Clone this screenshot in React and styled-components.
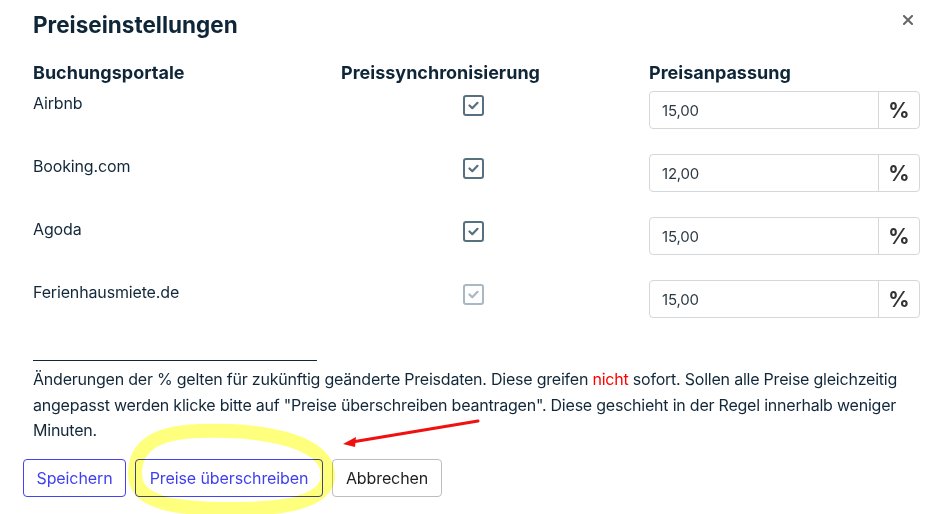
import React from "react";
import styled, { createGlobalStyle } from "styled-components";

const Global = createGlobalStyle`
  html, body { margin: 0; padding: 0; background: #fff; }
  body { font-family: "Inter", "Liberation Sans", sans-serif; color: #12283a; }
  * { box-sizing: border-box; }
`;

const Page = styled.div`
  position: relative;
  width: 932px;
  height: 514px;
  overflow: hidden;
  background: #fff;
`;

const Header = styled.div`
  display: flex;
  justify-content: space-between;
  align-items: center;
  padding: 10px 18px 0 33px;
  height: 40px;
`;

const Title = styled.h1`
  margin: 0;
  font-size: 22.5px;
  font-weight: 700;
  color: #0f2638;
  line-height: 30px;
`;

const CloseBtn = styled.button`
  border: 0;
  background: transparent;
  padding: 0;
  width: 12px;
  height: 12px;
  display: flex;
  align-items: center;
  justify-content: center;
  margin-top: -10px;
`;

const Body = styled.div`
  padding: 22px 12px 0 33px;
`;

const Grid = styled.div`
  display: grid;
  grid-template-columns: 308px 308px 1fr;
  row-gap: 25px;
`;

const HeadCell = styled.div`
  font-size: 18px;
  font-weight: 700;
  color: #0f2638;
  line-height: 22px;
  margin-bottom: -18px;
`;

const PortalName = styled.div`
  font-size: 16px;
  letter-spacing: -0.15px;
  line-height: 24px;
  color: #12283a;
`;

const CheckCell = styled.div`
  width: 264px;
  display: flex;
  justify-content: center;
  padding-top: 4px;
`;

const CheckBox = styled.span`
  width: 21px;
  height: 21px;
  border: 2px solid ${(p) => (p.$disabled ? "#a9b8c1" : "#56707f")};
  border-radius: 3px;
  display: flex;
  align-items: center;
  justify-content: center;
  color: ${(p) => (p.$disabled ? "#a9b8c1" : "#56707f")};
`;

const InputGroup = styled.div`
  display: flex;
  height: 38px;
  border: 1px solid #d4d8db;
  border-radius: 4px;
  overflow: hidden;
`;

const Input = styled.div`
  flex: 1;
  padding-left: 12px;
  display: flex;
  align-items: center;
  font-size: 15px;
  letter-spacing: -0.2px;
  color: #2d3a44;
`;

const Addon = styled.div`
  width: 41px;
  border-left: 1px solid #d4d8db;
  display: flex;
  align-items: center;
  justify-content: center;
  font-size: 21px;
  font-weight: 700;
  color: #333;
`;

const Divider = styled.div`
  width: 284px;
  height: 1px;
  background: #12283a;
  margin: 42px 0 6px 33px;
`;

const Note = styled.p`
  margin: 0 0 0 33px;
  width: 880px;
  font-size: 16px;
  letter-spacing: -0.22px;
  line-height: 25.5px;
  color: #12283a;
`;

const Red = styled.span`
  color: #ff0000;
`;

const Footer = styled.div`
  display: flex;
  gap: 9px;
  padding: 15px 0 0 23px;
`;

const Button = styled.button`
  height: 38px;
  padding: 0 12px;
  border-radius: 4px;
  background: #fff;
  font-family: inherit;
  font-size: 16px;
  letter-spacing: -0.1px;
  border: 1px solid ${(p) => (p.$primary ? "#4343f5" : "#bdbdbd")};
  color: ${(p) => (p.$primary ? "#3f3ff0" : "#222")};
  width: ${(p) => p.$w}px;
`;

const Annotation = styled.svg`
  position: absolute;
  left: 0;
  top: 0;
  pointer-events: none;
`;

const Highlight = styled.path`
  mix-blend-mode: multiply;
`;

const rows = [
  { name: "Airbnb", value: "15,00" },
  { name: "Booking.com", value: "12,00" },
  { name: "Agoda", value: "15,00" },
  { name: "Ferienhausmiete.de", value: "15,00", disabled: true },
];

const Check = () => (
  <svg width="11" height="9" viewBox="0 0 11 9">
    <path d="M1.5 4.5 L4.3 7.2 L9.5 1.8" fill="none" stroke="currentColor" strokeWidth="2.2" strokeLinecap="round" strokeLinejoin="round" />
  </svg>
);

export default function App() {
  return (
    <Page>
      <Global />
      <Header>
        <Title>Preiseinstellungen</Title>
        <CloseBtn aria-label="Schließen">
          <svg width="10" height="10" viewBox="0 0 10 10">
            <path d="M1 1 L9 9 M9 1 L1 9" stroke="#666" strokeWidth="2" strokeLinecap="square" />
          </svg>
        </CloseBtn>
      </Header>
      <Body>
        <Grid>
          <HeadCell>Buchungsportale</HeadCell>
          <HeadCell>Preissynchronisierung</HeadCell>
          <HeadCell>Preisanpassung</HeadCell>
          {rows.map((r) => (
            <React.Fragment key={r.name}>
              <PortalName>{r.name}</PortalName>
              <CheckCell>
                <CheckBox $disabled={r.disabled}>
                  <Check />
                </CheckBox>
              </CheckCell>
              <InputGroup>
                <Input>{r.value}</Input>
                <Addon>%</Addon>
              </InputGroup>
            </React.Fragment>
          ))}
        </Grid>
      </Body>
      <Divider />
      <Note>
        Änderungen der % gelten für zukünftig geänderte Preisdaten. Diese greifen <Red>nicht</Red> sofort. Sollen alle Preise gleichzeitig angepasst werden klicke bitte auf "Preise überschreiben beantragen". Diese geschieht in der Regel innerhalb weniger Minuten.
      </Note>
      <Footer>
        <Button $primary $w={103}>Speichern</Button>
        <Button $primary $w={188}>Preise überschreiben</Button>
        <Button $w={110}>Abbrechen</Button>
      </Footer>
      <Annotation width="932" height="514" viewBox="0 0 932 514">
        <Highlight
          d="M200 431 C262 429 318 440 327 468 C334 497 300 509 232 509 C165 509 135 500 135 474 C135 446 156 432 200 431 Z"
          fill="none"
          stroke="#ffff70"
          strokeOpacity="0.9"
          strokeWidth="14"
          strokeLinecap="round"
        />
        <path d="M478 421 L352 442" stroke="#f01010" strokeWidth="3" strokeLinecap="round" />
        <path d="M343 444 L356 437 L355 447 Z" fill="#f01010" />
      </Annotation>
    </Page>
  );
}
